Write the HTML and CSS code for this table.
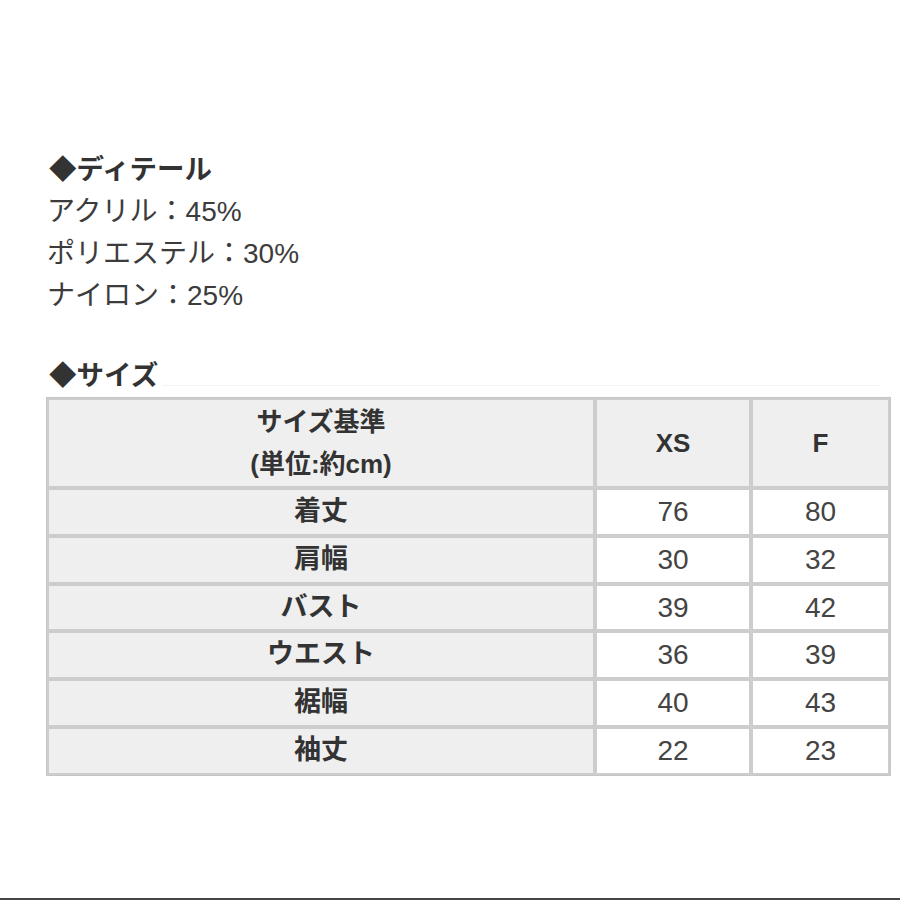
FILE: index.html
```html
<!DOCTYPE html>
<html lang="ja">
<head>
<meta charset="utf-8">
<title>サイズ</title>
<link rel="stylesheet" href="styles.css">
</head>
<body>
<div class="page">
  <main class="content">
    <section class="details">
      <h2 class="heading">◆ディテール</h2>
      <p class="line">アクリル：45%</p>
      <p class="line">ポリエステル：30%</p>
      <p class="line">ナイロン：25%</p>
    </section>
    <section class="size">
      <div class="size-head">
        <h2 class="heading">◆サイズ</h2>
        <div class="rule"></div>
      </div>
      <table class="size-table">
        <colgroup>
          <col class="c1">
          <col class="c2">
          <col class="c3">
        </colgroup>
        <thead>
          <tr>
            <th class="label">サイズ基準<br>(単位:約cm)</th>
            <th>XS</th>
            <th>F</th>
          </tr>
        </thead>
        <tbody>
          <tr><th class="label">着丈</th><td>76</td><td>80</td></tr>
          <tr><th class="label">肩幅</th><td>30</td><td>32</td></tr>
          <tr><th class="label">バスト</th><td>39</td><td>42</td></tr>
          <tr><th class="label">ウエスト</th><td>36</td><td>39</td></tr>
          <tr><th class="label">裾幅</th><td>40</td><td>43</td></tr>
          <tr><th class="label">袖丈</th><td>22</td><td>23</td></tr>
        </tbody>
      </table>
    </section>
  </main>
  <div class="bottom-bar"></div>
</div>
</body>
</html>
```
FILE: styles.css
```css
html, body {
  margin: 0;
  padding: 0;
  background: #ffffff;
}
body {
  font-family: "Liberation Sans", "Noto Sans CJK JP", sans-serif;
  color: #3a3a3a;
}
.page {
  height: 900px;
  display: flex;
  flex-direction: column;
  overflow: hidden;
}
.content {
  flex: 1;
  padding: 149px 9px 0 46px;
}
.heading {
  margin: 0;
  font-size: 27.5px;
  line-height: 42px;
  font-weight: 700;
  color: #333333;
  padding-left: 3px;
}
.line {
  margin: 0;
  font-size: 28px;
  line-height: 42px;
  padding-left: 1px;
  color: #3c3c3c;
}
.size {
  margin-top: 38px;
}
.size-head {
  display: flex;
  align-items: flex-end;
}
.rule {
  flex: 1;
  height: 1px;
  background: #f3f3f3;
  margin: 0 10px 11px 4px;
}
.size-table {
  width: 845px;
  table-layout: fixed;
  border-collapse: separate;
  border-spacing: 0;
  border: 1px solid #c6c6c6;
}
.c1 { width: 548px; }
.c2 { width: 156px; }
.size-table th,
.size-table td {
  border: 2px solid #cdcdcd;
  padding: 0;
  text-align: center;
  font-size: 27px;
  line-height: 43.8px;
}
.size-table th {
  font-weight: 700;
  color: #333333;
  background: #efefef;
}
.size-table thead th {
  line-height: 42px;
  padding: 1px 0;
  font-size: 26px;
}
.size-table td {
  font-weight: 400;
  color: #444444;
  background: #ffffff;
  font-size: 28px;
}
.bottom-bar {
  height: 2px;
  background: #454545;
  flex: none;
}
```
